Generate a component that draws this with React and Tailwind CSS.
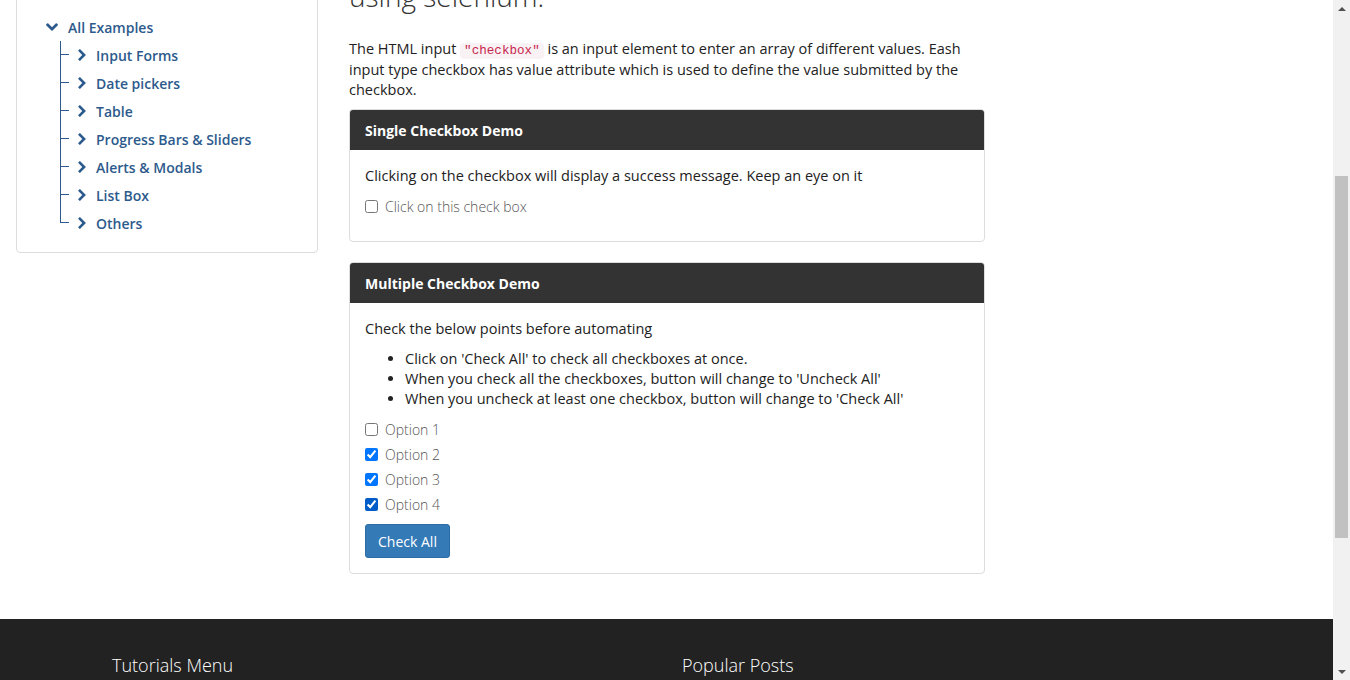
import React from "react";

function ChevronRight({ className }) {
  return (
    <svg viewBox="346 26 1036 1612" className={className} fill="currentColor">
      <path d="M1363 877l-742 742q-19 19-45 19t-45-19l-166-166q-19-19-19-45t19-45l531-531-531-531q-19-19-19-45t19-45l166-166q19-19 45-19t45 19l742 742q19 19 19 45t-19 45z" />
    </svg>
  );
}

function ChevronDown({ className }) {
  return (
    <svg viewBox="90 533 1612 1035" className={className} fill="currentColor">
      <path d="M1683 808l-742 741q-19 19-45 19t-45-19l-742-741q-19-19-19-45.5t19-45.5l166-165q19-19 45-19t45 19l531 531 531-531q19-19 45-19t45 19l166 165q19 19 19 45.5t-19 45.5z" />
    </svg>
  );
}

const items = [
  "Input Forms",
  "Date pickers",
  "Table",
  "Progress Bars & Sliders",
  "Alerts & Modals",
  "List Box",
  "Others",
];

function Sidebar() {
  return (
    <div className="w-[302px] h-[274px] border border-[#dddddd] rounded-b-[4px] bg-white pt-[33px] pl-[29px]">
      <div className="flex items-center h-[28px] text-[#2d5a8c]">
        <ChevronDown className="w-[12px] h-[8px]" />
        <span className="ml-[10px] text-[14px] font-semibold">All Examples</span>
      </div>
      <ul className="pl-[14px]">
        {items.map((it, i) => {
          const last = i === items.length - 1;
          return (
            <li key={it} className="flex items-stretch h-[28px]">
              <div className="w-[9px] flex flex-col">
                <div className="h-[14px] border-l border-b border-[#2d5a8c]" />
                <div className={"flex-1 " + (last ? "" : "border-l border-[#2d5a8c]")} />
              </div>
              <div className="flex items-center text-[#2d5a8c]">
                <ChevronRight className="ml-[9px] w-[8px] h-[12px]" />
                <span className="ml-[10px] text-[14px] font-semibold">{it}</span>
              </div>
            </li>
          );
        })}
      </ul>
    </div>
  );
}

function Check({ label, checked, dark }) {
  return (
    <label className="flex items-center h-[20px] text-[14px] text-[#555555] font-light">
      <input
        type="checkbox"
        defaultChecked={checked}
        className={"w-[13px] h-[13px] m-0 " + (dark ? "accent-[#005cc8]" : "")}
      />
      <span className="ml-[7px]">{label}</span>
    </label>
  );
}

function Card({ title, children }) {
  return (
    <div className="border border-[#dddddd] rounded-[4px] overflow-hidden bg-white">
      <div className="bg-[#333333] h-[40px] flex items-center px-[15px] text-white text-[14px] font-bold">
        {title}
      </div>
      <div className="px-[15px] pt-[16px] pb-[15px]">{children}</div>
    </div>
  );
}

export default function App() {
  return (
    <div
      className="w-[1350px] h-[680px] overflow-hidden flex bg-white text-[#333333]"
      style={{ fontFamily: "'Open Sans', 'Noto Sans', sans-serif" }}
    >
      <div className="w-[1333px] flex flex-col">
        <div className="flex mt-[-21px]">
          <div className="w-[349px] pl-[16px]">
            <Sidebar />
          </div>
          <div className="w-[636px]">
            <h2 className="text-[28px] leading-[34px] font-light text-[#333333]">using selenium.</h2>
            <p className="mt-[26px] text-[14.5px] leading-[20.5px] font-medium text-[#222222]">
              The HTML input{" "}
              <code className="font-['Liberation_Mono',monospace] text-[12.6px] leading-[16px] text-[#c7254e] bg-[#f9f2f4] px-[4px] py-[1px] rounded-[4px]">
                "checkbox"
              </code>{" "}
              is an input element to enter an array of different values. Eash input type checkbox has value attribute which is used to define the value submitted by the checkbox.
            </p>
            <div className="mt-[8.5px]">
              <Card title="Single Checkbox Demo">
                <p className="text-[14.5px] leading-[20px] font-medium text-[#222222]">
                  Clicking on the checkbox will display a success message. Keep an eye on it
                </p>
                <div className="mt-[10px] pb-[10px]">
                  <Check label="Click on this check box" />
                </div>
              </Card>
            </div>
            <div className="mt-[20px]">
              <Card title="Multiple Checkbox Demo">
                <p className="text-[14.5px] leading-[20px] font-medium text-[#222222]">
                  Check the below points before automating
                </p>
                <ul className="mt-[10px] pl-[40px] list-disc text-[14.5px] leading-[20px] font-medium text-[#222222]">
                  <li>Click on 'Check All' to check all checkboxes at once.</li>
                  <li>When you check all the checkboxes, button will change to 'Uncheck All'</li>
                  <li>When you uncheck at least one checkbox, button will change to 'Check All'</li>
                </ul>
                <div className="mt-[10px] flex flex-col gap-[5px]">
                  <Check label="Option 1" />
                  <Check label="Option 2" checked />
                  <Check label="Option 3" checked />
                  <Check label="Option 4" checked dark />
                </div>
                <button className="mt-[10px] w-[85px] h-[34px] bg-[#337ab7] border border-[#2e6da4] rounded-[3px] text-white text-[14px] font-normal">
                  Check All
                </button>
              </Card>
            </div>
          </div>
        </div>
        <div className="mt-[45px] flex-1 bg-[#222222] pt-[33px]">
          <div className="w-[1140px] ml-[112px] flex">
            <div className="w-[570px] text-[18px] font-light text-white">Tutorials Menu</div>
            <div className="w-[570px] text-[18px] font-light text-white">Popular Posts</div>
          </div>
        </div>
      </div>
      <div className="w-[17px] h-[680px] bg-[#f1f1f1] flex flex-col items-center">
        <div className="h-[17px] flex items-center justify-center">
          <div className="w-0 h-0 border-l-[4px] border-r-[4px] border-b-[4px] border-l-transparent border-r-transparent border-b-[#505050]" />
        </div>
        <div className="mt-[159px] w-[13px] h-[362px] bg-[#c1c1c1]" />
        <div className="flex-1" />
        <div className="h-[17px] flex items-center justify-center">
          <div className="w-0 h-0 border-l-[4px] border-r-[4px] border-t-[4px] border-l-transparent border-r-transparent border-t-[#505050]" />
        </div>
      </div>
    </div>
  );
}
